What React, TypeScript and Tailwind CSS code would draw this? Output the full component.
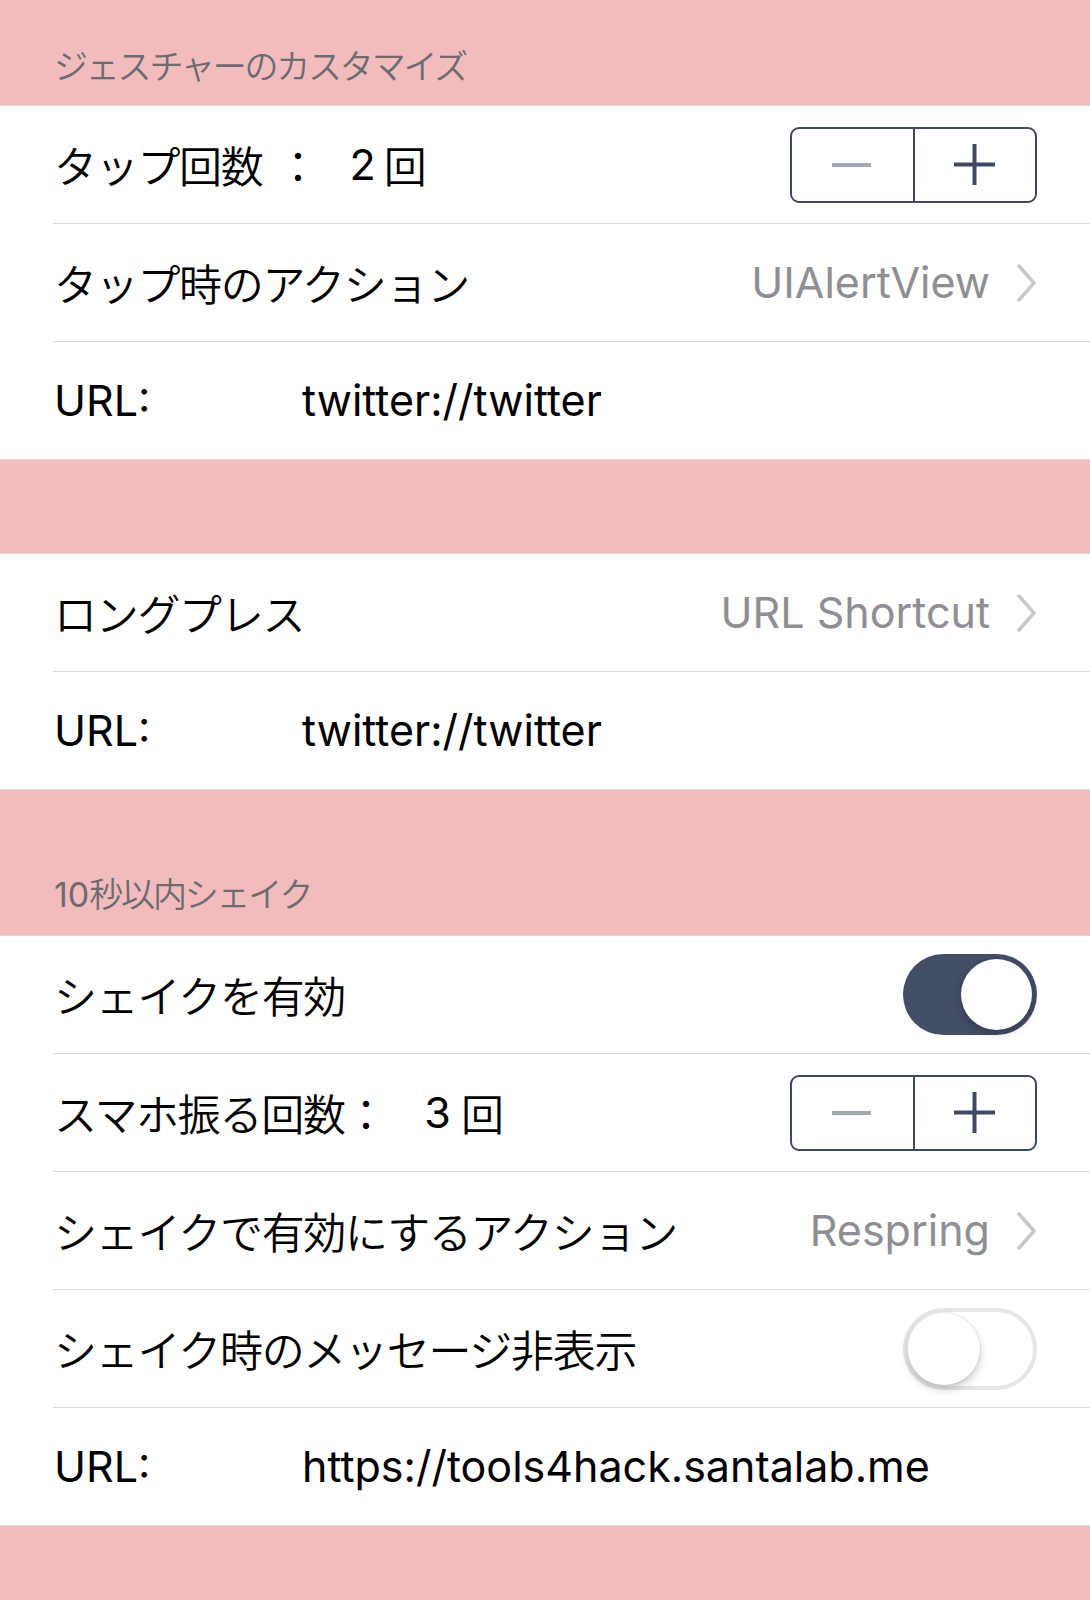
import React from "react";

const CJK = "font-['Noto_Sans_CJK_JP',sans-serif]";
const LAT = "font-['Inter','Noto_Sans_CJK_JP',sans-serif]";

function Header({ children, h }: { children: React.ReactNode; h: string }) {
  return (
    <div className={`${h} flex items-end pl-[54px] pb-[23px]`}>
      <span className={`${CJK} font-[350] text-[34px] leading-none tracking-[-2.2px] text-[#6c6c70]`}>{children}</span>
    </div>
  );
}

function Sep() {
  return <div className="ml-[53px] h-px bg-[#d9d9d9]" />;
}

function Row({ children }: { children: React.ReactNode }) {
  return <div className="h-[117px] flex items-center pl-[54px] pr-[53px]">{children}</div>;
}

function JLabel({ children }: { children: React.ReactNode }) {
  return <span className={`${CJK} font-[350] text-[43px] leading-none tracking-[-1.3px] text-black`}>{children}</span>;
}

function Stepper() {
  return (
    <div className="ml-auto flex w-[247px] h-[76px] border-2 border-[#3f4964] rounded-[9px] overflow-hidden">
      <div className="flex-1 flex items-center justify-center">
        <svg width="40" height="40" viewBox="0 0 40 40">
          <rect x="0" y="18" width="39" height="4" fill="#a3a8b4" />
        </svg>
      </div>
      <div className="w-[2px] bg-[#3f4964]" />
      <div className="flex-1 flex items-center justify-center">
        <svg width="41" height="41" viewBox="0 0 41 41">
          <rect x="0" y="18.5" width="41" height="4" fill="#3f4964" />
          <rect x="18.5" y="0" width="4" height="41" fill="#3f4964" />
        </svg>
      </div>
    </div>
  );
}

function Chevron() {
  return (
    <svg width="20" height="40" viewBox="0 0 20 40" className="ml-[27px]">
      <polyline points="2,3 17,20 2,37" fill="none" stroke="#c7c7cc" strokeWidth="3.5" strokeLinecap="round" strokeLinejoin="round" />
    </svg>
  );
}

function Value({ text }: { text: string }) {
  return (
    <div className="ml-auto flex items-center">
      <span className={`${LAT} text-[43px] leading-none text-[#8e8e93]`}>{text}</span>
      <Chevron />
    </div>
  );
}

function UrlRow({ url }: { url: string }) {
  return (
    <Row>
      <span className={`${LAT} text-[43px] leading-none text-black w-[248px]`}>URL:</span>
      <span className={`${LAT} text-[43px] leading-none text-black`}>{url}</span>
    </Row>
  );
}

function ToggleOn() {
  return (
    <div className="ml-auto w-[134px] h-[81px] rounded-full bg-[#434e67] p-[5px] flex justify-end">
      <div className="w-[71px] h-[71px] rounded-full bg-white shadow-[0_3px_8px_rgba(0,0,0,0.25)]" />
    </div>
  );
}

function ToggleOff() {
  return (
    <div className="ml-auto w-[134px] h-[82px] rounded-full border-[4px] border-[#e6e6e6] bg-white p-[1px] flex justify-start">
      <div className="w-[72px] h-[72px] rounded-full bg-white shadow-[0_4px_8px_rgba(0,0,0,0.22),0_0_0_1px_rgba(0,0,0,0.05)]" />
    </div>
  );
}

function Group({ children }: { children: React.ReactNode }) {
  return <div className="bg-white border-y border-[#d9d9d9]">{children}</div>;
}

export default function App() {
  return (
    <div className="w-[1090px] min-h-[1600px] bg-[#f2bcbd]">
      <Header h="h-[105px]">ジェスチャーのカスタマイズ</Header>
      <Group>
        <Row>
          <JLabel>タップ回数</JLabel>
          <span className={`${CJK} font-[350] text-[43px] leading-none text-black ml-[14px]`}>：</span>
          <span className={`${LAT} text-[43px] leading-none text-black ml-[30px]`}>2</span>
          <span className={`${CJK} font-[350] text-[43px] leading-none text-black ml-[8px]`}>回</span>
          <Stepper />
        </Row>
        <Sep />
        <Row>
          <JLabel>タップ時のアクション</JLabel>
          <Value text="UIAlertView" />
        </Row>
        <Sep />
        <UrlRow url="twitter://twitter" />
      </Group>
      <div className="h-[93px]" />
      <Group>
        <Row>
          <JLabel>ロングプレス</JLabel>
          <Value text="URL Shortcut" />
        </Row>
        <Sep />
        <UrlRow url="twitter://twitter" />
      </Group>
      <Header h="h-[145px]">
        <span className={`${LAT} tracking-normal font-normal`}>10</span>秒以内シェイク
      </Header>
      <Group>
        <Row>
          <JLabel>シェイクを有効</JLabel>
          <ToggleOn />
        </Row>
        <Sep />
        <Row>
          <JLabel>スマホ振る回数：</JLabel>
          <span className={`${LAT} text-[43px] leading-none text-black ml-[38px]`}>3</span>
          <span className={`${CJK} font-[350] text-[43px] leading-none text-black ml-[10px]`}>回</span>
          <Stepper />
        </Row>
        <Sep />
        <Row>
          <JLabel>シェイクで有効にするアクション</JLabel>
          <Value text="Respring" />
        </Row>
        <Sep />
        <Row>
          <JLabel>シェイク時のメッセージ非表示</JLabel>
          <ToggleOff />
        </Row>
        <Sep />
        <UrlRow url="https://tools4hack.santalab.me" />
      </Group>
    </div>
  );
}
